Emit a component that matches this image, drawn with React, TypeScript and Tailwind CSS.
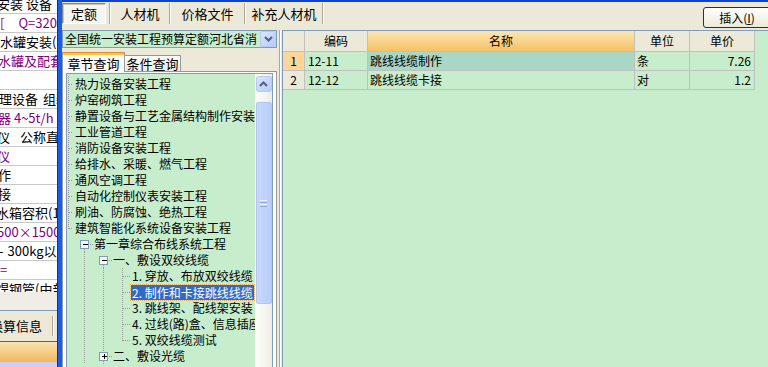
import React from 'react';

const cjk = "font-['Noto_Sans_CJK_SC','Noto_Sans',sans-serif]";

type Seg = { t: string; c?: string };
const leftRows: Seg[][] = [
  [{ t: '安装  设备', c: '-ml-[3px]' }],
  [{ t: '[', c: 'text-[#a0007a]' }, { t: 'Q=320立方', c: 'ml-[14px] text-[#800080]' }],
  [{ t: '水罐安装(卧' }],
  [{ t: '水罐及配套', c: '-ml-[2px] text-[#800080]' }],
  [],
  [{ t: '理设备', c: '-ml-[1px]' }, { t: '组装', c: 'ml-[5px]' }],
  [{ t: '器 4~5t/h', c: '-ml-[2px] text-[#800080]' }],
  [{ t: '仪', c: '-ml-[3px]' }, { t: '公称直径', c: 'ml-[10px]' }],
  [{ t: '仪', c: '-ml-[3px] text-[#800080]' }],
  [{ t: '作', c: '-ml-[2px]' }],
  [{ t: '接', c: '-ml-[2px]' }],
  [{ t: '水箱容积(10', c: '-ml-[4px]' }],
  [{ t: '500×1500×', c: '-ml-[3px] text-[#800080]' }],
  [{ t: '-', c: '-ml-[1px]' }, { t: '300kg以上', c: 'ml-[4px]' }],
  [{ t: '=', c: 'text-[#800080]' }],
  [{ t: '焊钢管(中部', c: '-ml-[4px]' }],
];

function LeftStrip() {
  return (
    <div className="flex w-[57px] shrink-0 flex-col">
      <div className="h-[292px] overflow-hidden bg-white text-[13px]">
        <div className="-mt-[5px]">
          {leftRows.map((row, i) => (
            <div
              key={i}
              className="flex h-[19px] items-center overflow-hidden whitespace-nowrap border-b border-[#c8c8c8] leading-[18px]"
            >
              {row.map((s, j) => (
                <span key={j} className={s.c}>
                  {s.t}
                </span>
              ))}
            </div>
          ))}
        </div>
      </div>
      <div className="h-[18px] bg-[#efede6]" />
      <div className="h-px bg-[#7f9db9]" />
      <div className="flex h-[30px] items-center bg-[#ece9d8] text-[13px]">
        <span className="-ml-[10px] whitespace-nowrap">换算信息</span>
        <div className="ml-auto mr-[3px] flex h-[20px]">
          <div className="w-px bg-[#aca899]" />
          <div className="w-px bg-white" />
        </div>
      </div>
      <div className="h-px bg-[#3a62c8]" />
      <div className="h-[20px] bg-gradient-to-b from-[#fbe2b0] to-[#f1b75a]" />
      <div className="flex-1 bg-[#cfcdf0]" />
    </div>
  );
}

function XpButton({ up }: { up?: boolean }) {
  return (
    <div className="flex h-[16px] w-[16px] items-center justify-center rounded-[2px] border border-[#b9cbf5] bg-gradient-to-br from-[#dbe6fe] to-[#b6cbf8]">
      <svg width="9" height="6" viewBox="0 0 9 6">
        <path
          d={up ? 'M1 5 L4.5 1.5 L8 5' : 'M1 1 L4.5 4.5 L8 1'}
          fill="none"
          stroke="#4d6185"
          strokeWidth="2"
        />
      </svg>
    </div>
  );
}

function TopBar() {
  const tabs = [
    { t: '人材机', w: 'w-[58px]' },
    { t: '价格文件', w: 'w-[73px]' },
    { t: '补充人材机', w: 'w-[76px]' },
  ];
  return (
    <div className="flex h-[28px] items-start text-[13px]">
      <div className="mt-px flex h-[21px] w-[44px] items-center justify-center border border-t-[#8b887a] border-l-[#8b887a] border-b-white border-r-white bg-[#f6f5f0] shadow-[inset_1px_1px_0_#c9c6b8]">
        定额
      </div>
      <div className="ml-[3px] mt-px flex h-[21px] w-[2px]">
        <div className="w-px bg-[#aca899]" />
        <div className="w-px bg-white" />
      </div>
      {tabs.map((t) => (
        <React.Fragment key={t.t}>
          <div className={`mt-px flex h-[21px] items-center justify-center ${t.w}`}>{t.t}</div>
          <div className="mt-px flex h-[21px] w-[2px]">
            <div className="w-px bg-[#aca899]" />
            <div className="w-px bg-white" />
          </div>
        </React.Fragment>
      ))}
      <div className="flex-1" />
      <div className="-mr-[3px] mt-[5px] flex h-[21px] w-[68px] items-center justify-center rounded-[3px] border border-[#003c74] bg-gradient-to-b from-white to-[#ece9d8] text-[12px]">
        插入(<span className="underline">I</span>)
      </div>
    </div>
  );
}

type K = 'none' | 'vert' | 'tee' | 'elbow' | 'minus' | 'plus';

function Conn({ kind, first }: { kind: K; first?: boolean }) {
  const w = first ? 8 : 19;
  const cx = first ? 1.5 : 9.5;
  const hEnd = first ? 6 : 18;
  const s = '#9a9a9a';
  const dash = '1 1';
  return (
    <svg width={w} height={16} className="shrink-0" shapeRendering="crispEdges">
      {(kind === 'vert' || kind === 'tee') && (
        <line x1={cx} y1={0} x2={cx} y2={16} stroke={s} strokeDasharray={dash} />
      )}
      {kind === 'elbow' && <line x1={cx} y1={0} x2={cx} y2={9} stroke={s} strokeDasharray={dash} />}
      {(kind === 'tee' || kind === 'elbow') && (
        <line x1={cx} y1={8.5} x2={hEnd} y2={8.5} stroke={s} strokeDasharray={dash} />
      )}
      {(kind === 'minus' || kind === 'plus') && (
        <g>
          <line x1={cx + 5} y1={8.5} x2={hEnd} y2={8.5} stroke={s} strokeDasharray={dash} />
          <line x1={cx} y1={13} x2={cx} y2={16} stroke={s} strokeDasharray={dash} />
          {kind === 'plus' && <line x1={cx} y1={0} x2={cx} y2={4} stroke={s} strokeDasharray={dash} />}
          <rect x={cx - 4} y={4.5} width={8} height={8} fill="#f7f7f4" stroke="#7f9db9" />
          <line x1={cx - 2} y1={8.5} x2={cx + 3} y2={8.5} stroke="#000" />
          {kind === 'plus' && <line x1={cx + 0.5} y1={6} x2={cx + 0.5} y2={11} stroke="#000" />}
        </g>
      )}
    </svg>
  );
}

const L3: K[] = ['none', 'vert', 'vert', 'tee'];
const tree: { t: string; k: K[]; sel?: boolean }[] = [
  { t: '热力设备安装工程', k: ['tee'] },
  { t: '炉窑砌筑工程', k: ['tee'] },
  { t: '静置设备与工艺金属结构制作安装工程', k: ['tee'] },
  { t: '工业管道工程', k: ['tee'] },
  { t: '消防设备安装工程', k: ['tee'] },
  { t: '给排水、采暖、燃气工程', k: ['tee'] },
  { t: '通风空调工程', k: ['tee'] },
  { t: '自动化控制仪表安装工程', k: ['tee'] },
  { t: '刷油、防腐蚀、绝热工程', k: ['tee'] },
  { t: '建筑智能化系统设备安装工程', k: ['elbow'] },
  { t: '第一章综合布线系统工程', k: ['none', 'minus'] },
  { t: '一、敷设双绞线缆', k: ['none', 'vert', 'minus'] },
  { t: '1. 穿放、布放双绞线缆', k: L3 },
  { t: '2. 制作和卡接跳线线缆', k: L3, sel: true },
  { t: '3. 跳线架、配线架安装', k: L3 },
  { t: '4. 过线(路)盒、信息插座安装', k: L3 },
  { t: '5. 双绞线缆测试', k: ['none', 'vert', 'vert', 'elbow'] },
  { t: '二、敷设光缆', k: ['none', 'vert', 'plus'] },
];

function Scrollbar() {
  return (
    <div className="flex w-[17px] shrink-0 flex-col items-center bg-gradient-to-r from-[#fefefb] to-[#eeede5] pt-[2px]">
      <XpButton up />
      <div className="mt-[10px] flex h-[202px] w-[16px] items-center justify-center rounded-[2px] border border-[#b2c5f4] bg-gradient-to-r from-[#c9d8fd] to-[#b9cdf8]">
        <div className="flex w-[7px] flex-col gap-px">
          <div className="h-px bg-[#eef4fe]" />
          <div className="h-px bg-[#8cabf0]" />
          <div className="h-px bg-[#eef4fe]" />
          <div className="h-px bg-[#8cabf0]" />
        </div>
      </div>
    </div>
  );
}

function ChapterPanel() {
  return (
    <div className="flex w-[215px] shrink-0 flex-col text-[12px]">
      <div className="flex h-[18px] items-center border border-[#7f9db9] bg-[#c7edcc]">
        <span className="ml-[2px] flex-1 overflow-hidden whitespace-nowrap leading-[16px]">
          全国统一安装工程预算定额河北省消
        </span>
        <XpButton />
      </div>
      <div className="mt-[4px] flex h-[20px] items-end text-[13px]">
        <div className="flex h-[20px] w-[63px] flex-col border-x border-[#919b9c] bg-[#fcfcfe]">
          <div className="h-px bg-[#e68b2c]" />
          <div className="h-[2px] bg-[#ffc73c]" />
          <div className="flex flex-1 items-center justify-center leading-[16px]">章节查询</div>
        </div>
        <div className="flex h-[17px] w-[56px] items-center justify-center border-r border-t border-b border-[#919b9c] bg-gradient-to-b from-white to-[#ecebe5] leading-[15px]">
          条件查询
        </div>
        <div className="h-px flex-1 bg-[#919b9c]" />
      </div>
      <div className="flex min-h-0 flex-1 flex-col border-x border-[#919b9c] bg-[#fcfcfe] px-[3px] pt-[1px]">
        <div className="flex min-h-0 flex-1 border border-b-0 border-[#7f9db9] bg-[#c7edcc]">
          <div className="min-w-0 flex-1 overflow-hidden pt-[2px]">
            {tree.map((n) => (
              <div key={n.t} className="flex h-[16px] items-center whitespace-nowrap leading-[16px]">
                {n.k.map((k, i) => (
                  <Conn key={i} kind={k} first={i === 0} />
                ))}
                <span
                  className={
                    n.sel
                      ? 'ml-[-1px] bg-[#316ac5] px-[1px] leading-[15px] text-white outline outline-1 outline-dotted outline-[#e0b060]'
                      : ''
                  }
                >
                  {n.t}
                </span>
              </div>
            ))}
          </div>
          <Scrollbar />
        </div>
      </div>
    </div>
  );
}

function Splitter() {
  return (
    <div className="flex w-[5px] shrink-0">
      <div className="w-[2px]" />
      <div className="w-px bg-[#aca899]" />
      <div className="w-px bg-white" />
    </div>
  );
}

const rows = [
  { n: '1', code: '12-11', name: '跳线线缆制作', unit: '条', price: '7.26', sel: true },
  { n: '2', code: '12-12', name: '跳线线缆卡接', unit: '对', price: '1.2' },
];

function Grid() {
  const cell = 'border-r border-b border-[#c0c0c0] h-full flex items-center shrink-0';
  return (
    <div className="min-w-0 flex-1 border-l border-t border-[#7f9db9] bg-[#c7edcc] text-[12px]">
      <div className="flex h-[21px]">
        <div className={`${cell} w-[22px] bg-[#ece9d8]`} />
        <div className={`${cell} w-[63px] justify-center bg-[#ece9d8]`}>编码</div>
        <div className={`${cell} w-[267px] justify-center bg-gradient-to-b from-[#fde6b0] to-[#f4c165]`}>名称</div>
        <div className={`${cell} w-[55px] justify-center bg-[#ece9d8]`}>单位</div>
        <div className={`${cell} w-[65px] justify-center bg-[#ece9d8]`}>单价</div>
      </div>
      {rows.map((r) => (
        <div key={r.n} className="flex h-[19px]">
          <div className={`${cell} w-[22px] justify-center ${r.sel ? 'bg-[#ffd699]' : 'bg-[#ece9d8]'}`}>{r.n}</div>
          <div className={`${cell} w-[63px] pl-[3px]`}>{r.code}</div>
          <div className={`${cell} w-[267px] pl-[2px] ${r.sel ? 'bg-[#aad6c6]' : ''}`}>{r.name}</div>
          <div className={`${cell} w-[55px] pl-[2px]`}>{r.unit}</div>
          <div className={`${cell} w-[65px] justify-end pr-[3px]`}>{r.price}</div>
        </div>
      ))}
    </div>
  );
}

export default function App() {
  return (
    <div className={`flex h-[367px] w-[768px] overflow-hidden bg-white text-black ${cjk}`}>
      <LeftStrip />
      <div className="flex w-[5px] shrink-0">
        <div className="w-px bg-[#0831a8]" />
        <div className="flex-1 bg-[#1a5de6]" />
      </div>
      <div className="flex min-w-0 flex-1 flex-col border-t-2 border-[#0b44d0] bg-[#ece9d8]">
        <TopBar />
        <div className="flex min-h-0 flex-1">
          <ChapterPanel />
          <Splitter />
          <Grid />
        </div>
      </div>
    </div>
  );
}
